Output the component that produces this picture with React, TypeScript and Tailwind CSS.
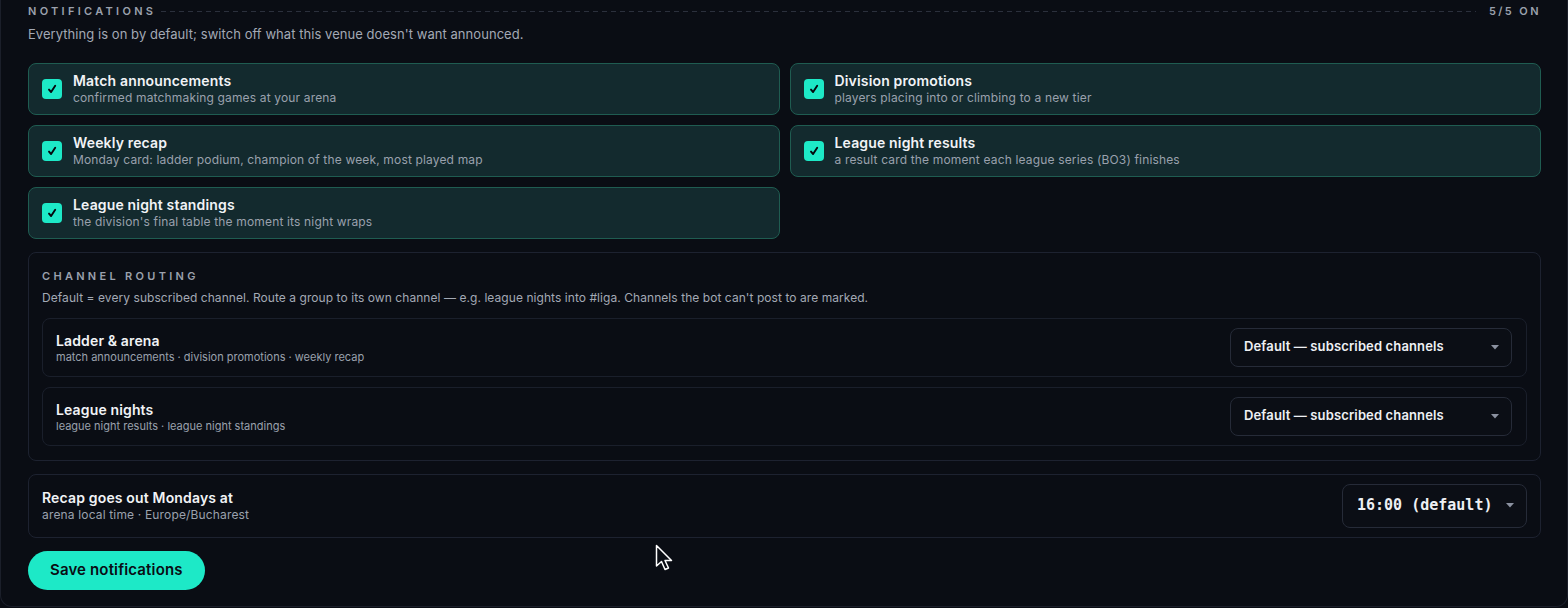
const items = [
  { title: 'Match announcements', desc: 'confirmed matchmaking games at your arena' },
  { title: 'Division promotions', desc: 'players placing into or climbing to a new tier' },
  { title: 'Weekly recap', desc: 'Monday card: ladder podium, champion of the week, most played map' },
  { title: 'League night results', desc: 'a result card the moment each league series (BO3) finishes' },
  { title: 'League night standings', desc: "the division's final table the moment its night wraps" },
];

const routes = [
  { title: 'Ladder & arena', desc: 'match announcements · division promotions · weekly recap' },
  { title: 'League nights', desc: 'league night results · league night standings' },
];

function Caret() {
  return (
    <svg width="8" height="5" viewBox="0 0 8 5" className="shrink-0">
      <path d="M0 0 L8 0 L4 4.5 Z" fill="#8b91a0" />
    </svg>
  );
}

function ToggleCard({ title, desc }: { title: string; desc: string }) {
  return (
    <div className="flex items-center gap-[11px] h-[52px] px-[13px] rounded-lg border border-[#1f5c51] bg-[#132a2e]">
      <div className="w-5 h-5 rounded-[4px] bg-[#1de9c7] flex items-center justify-center shrink-0">
        <svg width="10" height="10" viewBox="0 0 10 10">
          <path
            d="M2 5.6 L4.1 8 L8.2 1.8"
            fill="none"
            stroke="#05080d"
            strokeWidth="1.9"
            strokeLinecap="round"
            strokeLinejoin="round"
          />
        </svg>
      </div>
      <div className="flex flex-col tracking-[0.01em]">
        <span className="text-[14px] leading-[18px] font-semibold text-[#f1f3f6]">{title}</span>
        <span className="text-[12px] leading-[16px] text-[#9aa1ad]">{desc}</span>
      </div>
    </div>
  );
}

export default function App() {
  return (
    <div className="min-h-[608px] bg-[#0a0d14] font-['Inter',sans-serif] relative">
      <div className="border border-t-0 border-[#1b1f2a] rounded-b-xl pl-[27px] pr-[26px] pt-[3px] pb-[15px] h-[607px]">
        <div className="flex items-center gap-[5px]">
          <span className="text-[11px] font-semibold tracking-[0.3em] text-[#9ba1ad]">NOTIFICATIONS</span>
          <div className="flex-1 h-px bg-[repeating-linear-gradient(90deg,#2b303c_0_5px,transparent_5px_9px)]" />
          <span className="ml-[8px] text-[11px] font-semibold tracking-[0.22em] text-[#9ba1ad]">5/5 ON</span>
        </div>
        <p className="mt-[5px] text-[13px] tracking-[0.004em] text-[#a3a9b5]">
          Everything is on by default; switch off what this venue doesn't want announced.
        </p>

        <div className="mt-[19px] grid grid-cols-2 gap-x-[10px] gap-y-[10px]">
          {items.map((it) => (
            <ToggleCard key={it.title} {...it} />
          ))}
        </div>

        <div className="mt-[13px] rounded-lg border border-[#1d2230] px-[13px] pt-[15px] pb-[14px]">
          <div className="text-[11px] font-semibold tracking-[0.3em] text-[#9ba1ad]">CHANNEL ROUTING</div>
          <p className="mt-[4px] text-[12px] tracking-[0.005em] text-[#a3a9b5]">
            Default = every subscribed channel. Route a group to its own channel — e.g. league nights into #liga.
            Channels the bot can't post to are marked.
          </p>
          <div className="mt-[11px] flex flex-col gap-[10px]">
            {routes.map((r) => (
              <div
                key={r.title}
                className="flex items-center justify-between h-[59px] rounded-lg border border-[#1a1f2b] pl-[13px] pr-[14px]"
              >
                <div className="flex flex-col pt-[3px]">
                  <span className="text-[14px] leading-[18px] font-semibold tracking-[0.01em] text-[#f1f3f6]">
                    {r.title}
                  </span>
                  <span className="text-[11px] leading-[15px] text-[#9aa1ad]">{r.desc}</span>
                </div>
                <div className="w-[282px] h-[39px] rounded-lg border border-[#262b38] bg-[#0b0e15] flex items-center justify-between pl-[13px] pr-[12px]">
                  <span className="text-[13px] font-semibold tracking-[0.01em] text-[#eef0f4]">
                    Default — subscribed channels
                  </span>
                  <Caret />
                </div>
              </div>
            ))}
          </div>
        </div>

        <div className="mt-[13px] h-[64px] rounded-lg border border-[#1d2230] flex items-center justify-between pl-[13px] pr-[13px]">
          <div className="flex flex-col tracking-[0.01em]">
            <span className="text-[14px] leading-[18px] font-semibold text-[#f1f3f6]">Recap goes out Mondays at</span>
            <span className="text-[12px] leading-[16px] text-[#9aa1ad]">arena local time · Europe/Bucharest</span>
          </div>
          <div className="w-[185px] h-[44px] rounded-lg border border-[#262b38] bg-[#0b0e15] flex items-center justify-between pl-[14px] pr-[12px]">
            <span className="font-['DejaVu_Sans_Mono',monospace] text-[15px] font-semibold text-[#eef0f4]">
              16:00 (default)
            </span>
            <Caret />
          </div>
        </div>

        <button className="mt-[13px] h-[39px] px-[22px] rounded-full bg-[#1de9c7] text-[15px] font-semibold tracking-[0.01em] text-[#0a0d14]">
          Save notifications
        </button>
      </div>

      <svg className="absolute left-[655px] top-[544px]" width="20" height="30" viewBox="0 0 20 30">
        <path
          d="M1.5 1.5 L1.5 22 L6.5 17.5 L10 25.5 L13.5 24 L10 16.5 L16.5 16.5 Z"
          fill="#0a0d14"
          stroke="#ffffff"
          strokeWidth="1.5"
          strokeLinejoin="round"
        />
      </svg>
    </div>
  );
}
